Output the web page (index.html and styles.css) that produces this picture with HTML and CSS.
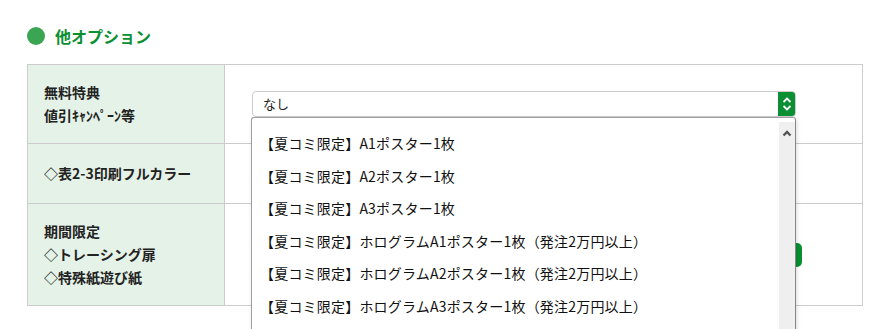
FILE: index.html
```html
<!DOCTYPE html>
<html lang="ja">
  <head>
    <meta charset="UTF-8" />
    <meta name="viewport" content="width=device-width, initial-scale=1.0" />
    <title>他オプション</title>
    <link rel="stylesheet" href="styles.css">
  </head>
  <body>
    <div class="section">
      <h2 class="section-title"><span class="dot"></span>他オプション</h2>

      <table class="option-table">
        <tr class="row-tall">
          <th>無料特典<br />値引ｷｬﾝﾍﾟｰﾝ等</th>
          <td>
            <div class="select-wrap">
              <div class="select-box">
                <span class="select-value">なし</span>
                <span class="select-btn">
                  <svg width="10" height="16" viewBox="0 0 10 16">
                    <path d="M1.5 6 L5 2.5 L8.5 6" fill="none" stroke="#fff" stroke-width="1.8" />
                    <path d="M1.5 10 L5 13.5 L8.5 10" fill="none" stroke="#fff" stroke-width="1.8" />
                  </svg>
                </span>
              </div>

              <!-- 開いているドロップダウン -->
              <div class="dropdown">
                <ul class="dropdown-list">
                  <li>【夏コミ限定】A1ポスター1枚</li>
                  <li>【夏コミ限定】A2ポスター1枚</li>
                  <li>【夏コミ限定】A3ポスター1枚</li>
                  <li>【夏コミ限定】ホログラムA1ポスター1枚（発注2万円以上）</li>
                  <li>【夏コミ限定】ホログラムA2ポスター1枚（発注2万円以上）</li>
                  <li>【夏コミ限定】ホログラムA3ポスター1枚（発注2万円以上）</li>
                </ul>
                <div class="scrollbar">
                  <svg width="10" height="8" viewBox="0 0 10 8">
                    <path d="M1.5 6.5 L5 3 L8.5 6.5" fill="none" stroke="#555" stroke-width="2.4" />
                  </svg>
                </div>
              </div>
            </div>
          </td>
        </tr>
        <tr class="row-mid">
          <th>◇表2-3印刷フルカラー</th>
          <td></td>
        </tr>
        <tr class="row-big">
          <th>期間限定<br />◇トレーシング扉<br />◇特殊紙遊び紙</th>
          <td>
            <div class="row-action">
              <button class="btn-green">追加</button>
            </div>
          </td>
        </tr>
      </table>
    </div>
  </body>
</html>
```
FILE: styles.css
```css
:root {
  --green: #0b8f33;
  --green-dot: #3aa653;
  --label-bg: #e5f2e7;
  --border: #cccccc;
  --text-color: #333;
}

* {
  margin: 0;
  padding: 0;
  box-sizing: border-box;
}

html,
body {
  height: 329px;
  overflow: hidden;
}

body {
  font-family: "Noto Sans CJK JP", "Noto Sans", sans-serif;
  color: var(--text-color);
  background-color: #fff;
}

.section {
  padding: 26px 30px 0 27px;
}

.section-title {
  display: flex;
  align-items: center;
  gap: 10px;
  height: 20px;
  margin-bottom: 18px;
  font-size: 16px;
  font-weight: bold;
  color: var(--green);
  line-height: 20px;
}

.dot {
  width: 18px;
  height: 18px;
  border-radius: 50%;
  background-color: var(--green-dot);
}

.option-table {
  width: 100%;
  border-collapse: collapse;
  table-layout: fixed;
}

.option-table th,
.option-table td {
  border: 1px solid var(--border);
  vertical-align: middle;
}

.option-table th {
  width: 197px;
  background-color: var(--label-bg);
  text-align: left;
  font-size: 14px;
  font-weight: bold;
  line-height: 23px;
  padding: 0 16px;
  color: #222;
}

.option-table td {
  padding: 0 66px 0 27px;
}

.row-tall {
  height: 79px;
}

.row-mid {
  height: 60px;
}

.row-big {
  height: 102px;
}

.select-wrap {
  position: relative;
}

.select-box {
  display: flex;
  align-items: stretch;
  height: 26px;
  border: 1px solid var(--border);
  border-radius: 4px;
  background-color: #fff;
  overflow: hidden;
}

.select-value {
  flex: 1;
  font-size: 13px;
  line-height: 24px;
  padding-left: 10px;
  color: #222;
}

.select-btn {
  width: 17px;
  display: flex;
  align-items: center;
  justify-content: center;
  background-color: var(--green);
}

.dropdown {
  position: absolute;
  top: 26px;
  left: -1px;
  right: 0;
  height: 220px;
  display: flex;
  background-color: #fff;
  border: 1px solid #a0a0a0;
  border-right-color: #888;
  border-radius: 3px 3px 0 0;
  box-shadow: 1px 2px 4px rgba(0, 0, 0, 0.15);
  overflow: hidden;
  z-index: 10;
}

.dropdown-list {
  flex: 1;
  list-style: none;
  padding: 9px 0 0 8px;
}

.dropdown-list li {
  height: 32.6px;
  line-height: 32.6px;
  font-size: 14px;
  letter-spacing: 0.2px;
  color: #111;
  white-space: nowrap;
}

.scrollbar {
  width: 16px;
  margin-top: 4px;
  background-color: #efefef;
  display: flex;
  justify-content: center;
  padding-top: 7px;
}

.row-action {
  display: flex;
  justify-content: flex-end;
  margin-right: -6px;
}

.btn-green {
  height: 24px;
  padding: 0 14px;
  border: none;
  border-radius: 5px;
  background-color: var(--green);
  color: #fff;
  font-family: inherit;
  font-size: 12px;
}
```
